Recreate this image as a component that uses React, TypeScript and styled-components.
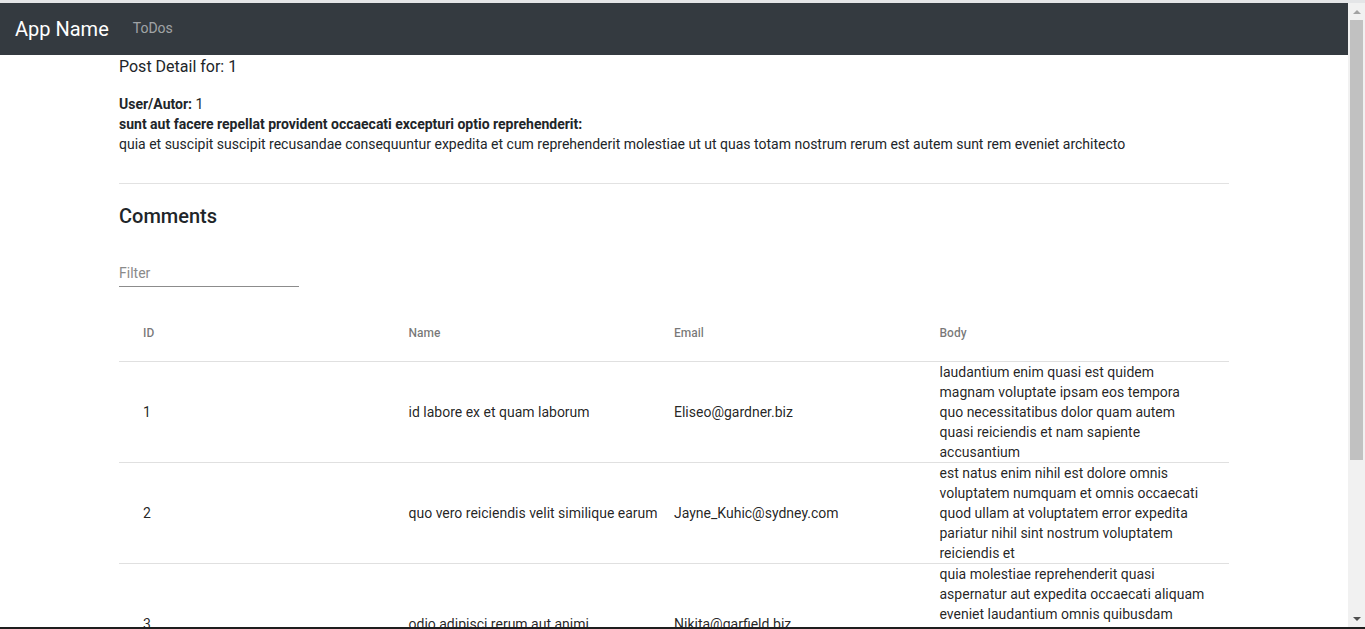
import React from "react";
import styled, { createGlobalStyle } from "styled-components";

const GlobalStyle = createGlobalStyle`
  html, body {
    margin: 0;
    padding: 0;
    overflow: hidden;
    background: #ffffff;
  }
  * { box-sizing: border-box; }
  body {
    font-family: Roboto, "Liberation Sans", Arial, sans-serif;
    color: #212529;
  }
`;

const Frame = styled.div`
  height: 629px;
  display: flex;
  flex-direction: column;
  overflow: hidden;
`;

const TopStrip = styled.div`
  height: 3px;
  flex: none;
  background: #e4e5e7;
`;

const BottomStrip = styled.div`
  height: 2px;
  flex: none;
  background: #1e1e1e;
`;

const Viewport = styled.div`
  flex: 1;
  min-height: 0;
  display: flex;
`;

const Page = styled.div`
  flex: 1;
  min-width: 0;
  overflow: hidden;
`;

const Scrollbar = styled.div`
  width: 17px;
  flex: none;
  background: #f1f1f1;
  display: flex;
  flex-direction: column;
  align-items: center;
`;

const Arrow = styled.div<{ $dir: "up" | "down" }>`
  height: 17px;
  flex: none;
  display: flex;
  align-items: center;
  justify-content: center;
  &::after {
    content: "";
    width: 0;
    height: 0;
    border-left: 4px solid transparent;
    border-right: 4px solid transparent;
    ${(p) =>
      p.$dir === "up"
        ? "border-bottom: 4px solid #a3a3a3;"
        : "border-top: 4px solid #505050;"}
  }
`;

const Track = styled.div`
  flex: 1;
  width: 100%;
  display: flex;
  flex-direction: column;
  align-items: center;
`;

const Thumb = styled.div`
  width: 13px;
  height: 440px;
  background: #c1c1c1;
`;

const Navbar = styled.nav`
  height: 52px;
  background: #343a40;
  display: flex;
  align-items: center;
  padding: 0 16px 0 15px;
`;

const Brand = styled.a`
  font-size: 20px;
  line-height: 30px;
  color: #ffffff;
  margin-right: 16px;
`;

const NavLink = styled.a`
  font-size: 14px;
  color: rgba(255, 255, 255, 0.55);
  padding: 0 8px;
  margin-top: -3px;
`;

const Container = styled.main`
  max-width: 1140px;
  margin: 0 auto;
  padding: 0 15px;
`;

const PageTitle = styled.div`
  font-size: 16px;
  line-height: 24px;
  margin-bottom: 15px;
`;

const Line = styled.div`
  font-size: 14px;
  line-height: 20px;
`;

const Strong = styled.b`
  font-weight: 700;
`;

const Divider = styled.hr`
  border: 0;
  border-top: 1px solid #e2e2e2;
  margin: 29px 0 16px;
`;

const Heading = styled.h2`
  font-size: 20px;
  line-height: 32px;
  font-weight: 500;
  margin: 0;
`;

const FilterField = styled.div`
  width: 180px;
  margin-top: 31px;
  border-bottom: 1px solid #8c8c8c;
  padding-bottom: 3px;
`;

const FilterInput = styled.input`
  width: 100%;
  border: 0;
  outline: none;
  padding: 0;
  font-family: inherit;
  font-size: 14px;
  line-height: 20px;
  color: rgba(0, 0, 0, 0.87);
  &::placeholder {
    color: #8a8a8a;
  }
`;

const Table = styled.div`
  margin-top: 18px;
`;

const HeaderRow = styled.div`
  height: 57px;
  display: flex;
  align-items: center;
  border-bottom: 1px solid #e0e0e0;
  padding: 0 24px;
`;

const Row = styled.div`
  display: flex;
  align-items: center;
  border-bottom: 1px solid #e0e0e0;
  padding: 0 24px;
`;

const HeadCell = styled.div`
  flex: 1;
  font-size: 12px;
  font-weight: 500;
  color: rgba(0, 0, 0, 0.54);
`;

const Cell = styled.div`
  flex: 1;
  font-size: 14px;
  line-height: 20px;
  color: rgba(0, 0, 0, 0.87);
`;

const comments = [
  {
    id: 1,
    name: "id labore ex et quam laborum",
    email: "Eliseo@gardner.biz",
    body:
      "laudantium enim quasi est quidem magnam voluptate ipsam eos tempora quo necessitatibus dolor quam autem quasi reiciendis et nam sapiente accusantium",
  },
  {
    id: 2,
    name: "quo vero reiciendis velit similique earum",
    email: "Jayne_Kuhic@sydney.com",
    body:
      "est natus enim nihil est dolore omnis voluptatem numquam et omnis occaecati quod ullam at voluptatem error expedita pariatur nihil sint nostrum voluptatem reiciendis et",
  },
  {
    id: 3,
    name: "odio adipisci rerum aut animi",
    email: "Nikita@garfield.biz",
    body:
      "quia molestiae reprehenderit quasi aspernatur aut expedita occaecati aliquam eveniet laudantium omnis quibusdam delectus saepe quia accusamus maiores nam est cum et ducimus et vero voluptates excepturi deleniti ratione",
  },
];

export default function App() {
  return (
    <>
      <GlobalStyle />
      <Frame>
        <TopStrip />
        <Viewport>
          <Page>
            <Navbar>
              <Brand>App Name</Brand>
              <NavLink>ToDos</NavLink>
            </Navbar>
            <Container>
              <PageTitle>Post Detail for: 1</PageTitle>
              <Line>
                <Strong>User/Autor:</Strong> 1
              </Line>
              <Line>
                <Strong>
                  sunt aut facere repellat provident occaecati excepturi optio
                  reprehenderit:
                </Strong>
              </Line>
              <Line>
                quia et suscipit suscipit recusandae consequuntur expedita et cum
                reprehenderit molestiae ut ut quas totam nostrum rerum est autem
                sunt rem eveniet architecto
              </Line>
              <Divider />
              <Heading>Comments</Heading>
              <FilterField>
                <FilterInput placeholder="Filter" />
              </FilterField>
              <Table>
                <HeaderRow>
                  <HeadCell>ID</HeadCell>
                  <HeadCell>Name</HeadCell>
                  <HeadCell>Email</HeadCell>
                  <HeadCell>Body</HeadCell>
                </HeaderRow>
                {comments.map((c) => (
                  <Row key={c.id}>
                    <Cell>{c.id}</Cell>
                    <Cell>{c.name}</Cell>
                    <Cell>{c.email}</Cell>
                    <Cell>{c.body}</Cell>
                  </Row>
                ))}
              </Table>
            </Container>
          </Page>
          <Scrollbar>
            <Arrow $dir="up" />
            <Track>
              <Thumb />
            </Track>
            <Arrow $dir="down" />
          </Scrollbar>
        </Viewport>
        <BottomStrip />
      </Frame>
    </>
  );
}
